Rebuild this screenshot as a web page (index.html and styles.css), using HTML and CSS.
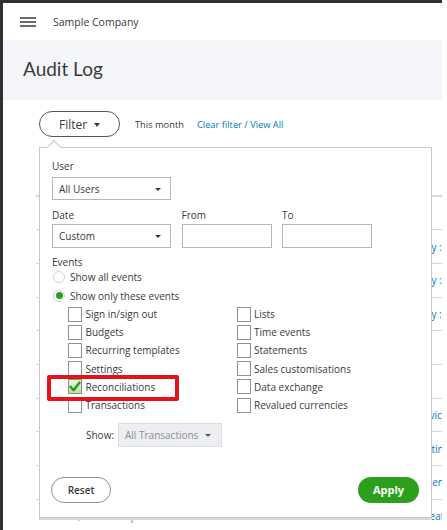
FILE: index.html
```html
<!DOCTYPE html>
<html lang="en">
<head>
<meta charset="utf-8">
<title>Audit Log</title>
<link rel="stylesheet" href="styles.css">
</head>
<body>
<div class="frame">
  <header class="topbar">
    <button class="menu" aria-label="Menu"><span></span><span></span><span></span></button>
    <span class="company">Sample Company</span>
  </header>
  <div class="title-band"><h1>Audit Log</h1></div>
  <main class="content">
    <div class="filter-row">
      <button class="filter-btn">Filter<span class="caret-lg"></span></button>
      <span class="range">This month</span>
      <a class="link" href="#">Clear filter / View All</a>
    </div>

    <div class="log">
      <div class="log-head"></div>
      <div class="log-row"><span></span><span></span><span class="ev"></span></div>
      <div class="log-row"><span></span><span></span><span class="ev">Changed Customer: <a href="#">Sample Company : Payroll</a></span></div>
      <div class="log-row"><span></span><span></span><span class="ev">Changed Customer: <a href="#">Sample Company : Invoices</a></span></div>
      <div class="log-row"><span></span><span></span><span class="ev">Changed Customer: <a href="#">Sample Company : Sales</a></span></div>
      <div class="log-row"><span></span><span></span><span class="ev"></span></div>
      <div class="log-row"><span></span><span></span><span class="ev"></span></div>
      <div class="log-row"><span></span><span></span><span class="ev">Sales Product or Service: <a href="#">Garden Services</a></span></div>
      <div class="log-row"><span></span><span></span><span class="ev">Sales Product or Service: <a href="#">Design:Painting</a></span></div>
      <div class="log-row"><span></span><span></span><span class="ev">Sales Product or Service: <a href="#">Rocks: Gardener</a></span></div>
      <div class="log-row"><span>Mar 21, 2021 3:14 pm</span><span>Sue Smith</span><span class="ev">Sales Product or Service: <a href="#">Services: Treatment</a></span></div>
    </div>

    <div class="panel">
      <div class="field-label first">User</div>
      <div class="select sel-user">All Users<span class="caret"></span></div>

      <div class="date-row">
        <div>
          <div class="field-label">Date</div>
          <div class="select sel-date">Custom<span class="caret"></span></div>
        </div>
        <div>
          <div class="field-label">From</div>
          <div class="input"></div>
        </div>
        <div>
          <div class="field-label">To</div>
          <div class="input"></div>
        </div>
      </div>

      <div class="field-label events">Events</div>
      <label class="radio-row"><span class="radio"></span>Show all events</label>
      <label class="radio-row"><span class="radio on"></span>Show only these events</label>

      <div class="checks">
        <label class="check"><span class="box"></span>Sign in/sign out</label>
        <label class="check"><span class="box"></span>Lists</label>
        <label class="check"><span class="box"></span>Budgets</label>
        <label class="check"><span class="box"></span>Time events</label>
        <label class="check"><span class="box"></span>Recurring templates</label>
        <label class="check"><span class="box"></span>Statements</label>
        <label class="check"><span class="box"></span>Settings</label>
        <label class="check"><span class="box"></span>Sales customisations</label>
        <label class="check"><span class="box checked"><svg viewBox="0 0 14 15" width="14" height="15"><path d="M2.6 7.8 L5.6 11.2 L11.6 3.6" fill="none" stroke="#239a1a" stroke-width="2.4" stroke-linecap="round" stroke-linejoin="round"/></svg></span>Reconciliations</label>
        <label class="check"><span class="box"></span>Data exchange</label>
        <label class="check"><span class="box"></span>Transactions</label>
        <label class="check"><span class="box"></span>Revalued currencies</label>
      </div>

      <div class="show-row">
        <span>Show:</span>
        <div class="select disabled">All Transactions<span class="caret"></span></div>
      </div>

      <div class="actions">
        <button class="btn-reset">Reset</button>
        <button class="btn-apply">Apply</button>
      </div>

      <div class="highlight"></div>
    </div>
  </main>
</div>
</body>
</html>
```

FILE: styles.css
```css
* { box-sizing: border-box; }

html, body {
  margin: 0;
  padding: 0;
}

body {
  background: #fff;
  font-family: "Open Sans", "Liberation Sans", sans-serif;
  font-size: 10px;
  color: #393a3d;
}

.frame {
  width: 442px;
  height: 530px;
  overflow: hidden;
  border-top: 3px solid #2f3033;
  border-left: 3px solid #2f3033;
  background: #fff;
  display: flex;
  flex-direction: column;
}

/* top bar */
.topbar {
  height: 37px;
  flex: none;
  display: flex;
  align-items: center;
  padding-left: 17px;
  padding-top: 1px;
  background: #fff;
}

.menu {
  width: 16px;
  height: 10px;
  padding: 0;
  border: 0;
  background: none;
  display: flex;
  flex-direction: column;
  justify-content: space-between;
  margin-right: 17px;
}

.menu span {
  display: block;
  height: 2px;
  background: #6b6c72;
}

.company {
  font-size: 10.5px;
  color: #393a3d;
}

/* title band */
.title-band {
  height: 60px;
  flex: none;
  background: #f4f5f8;
  padding-left: 20px;
  padding-bottom: 3px;
  display: flex;
  align-items: center;
}

.title-band h1 {
  margin: 0;
  font-family: Lato, "Open Sans", sans-serif;
  font-weight: 400;
  font-size: 19px;
  color: #393a3d;
}

/* content */
.content {
  position: relative;
  flex: 1;
  background: #fff;
}

.filter-row {
  display: flex;
  align-items: center;
  height: 26px;
  margin-top: 11px;
  padding-left: 36px;
}

.filter-btn {
  width: 81px;
  height: 26px;
  border: 1px solid #54565b;
  border-radius: 13px;
  background: #fff;
  font-family: "Open Sans", sans-serif;
  font-size: 12px;
  color: #393a3d;
  padding: 0 0 0 19px;
  display: flex;
  align-items: center;
}

.caret-lg {
  width: 0;
  height: 0;
  border-left: 3.5px solid transparent;
  border-right: 3.5px solid transparent;
  border-top: 4px solid #393a3d;
  margin-left: 7px;
  margin-top: 1px;
}

.range {
  margin-left: 15px;
  font-size: 9.3px;
  color: #393a3d;
}

.link {
  margin-left: 13px;
  font-size: 9.3px;
  color: #0077c5;
  text-decoration: none;
}

/* background log table */
.log {
  margin-top: 13px;
  padding-left: 33px;
}

.log-head,
.log-row {
  display: grid;
  grid-template-columns: 117px 100px 1fr;
  align-items: center;
  white-space: nowrap;
  overflow: hidden;
}

.log-head {
  height: 46.5px;
  border-bottom: 2px solid #d4d7dc;
}

.log-row {
  height: 33.7px;
  border-bottom: 1px solid #d4d7dc;
  color: #6b6c72;
}

.log-row span {
  overflow: hidden;
  padding-left: 7px;
}

.log-row span:first-child {
  padding-left: 9px;
}

.log-row a {
  color: #0077c5;
  text-decoration: none;
}

/* filter panel */
.panel {
  position: absolute;
  left: 36px;
  top: 47px;
  width: 393px;
  background: #fff;
  border: 1px solid #c6c8cc;
  box-shadow: 0 2px 0 #d6d8db;
  padding: 0 12px 14px 12px;
}

.panel::before {
  content: "";
  position: absolute;
  left: 9px;
  top: -6px;
  width: 9px;
  height: 9px;
  background: #fff;
  border-top: 1px solid #c6c8cc;
  border-left: 1px solid #c6c8cc;
  transform: rotate(45deg);
}

.field-label {
  line-height: 14px;
  height: 14px;
}

.field-label.first {
  margin-top: 11px;
}

.select {
  position: relative;
  display: flex;
  align-items: center;
  height: 23px;
  border: 1px solid #b3b6bb;
  padding-left: 6px;
  background: #fff;
  color: #393a3d;
}

.sel-user {
  width: 119px;
  margin-top: 4px;
}

.caret {
  position: absolute;
  right: 9px;
  top: 50%;
  margin-top: -1px;
  width: 0;
  height: 0;
  border-left: 3px solid transparent;
  border-right: 3px solid transparent;
  border-top: 3px solid #393a3d;
}

.date-row {
  display: grid;
  grid-template-columns: 119px 90px 90px;
  column-gap: 10.5px;
  margin-top: 8px;
}

.sel-date {
  width: 119px;
  height: 24px;
  margin-top: 2px;
}

.input {
  height: 24px;
  margin-top: 2px;
  border: 1px solid #b3b6bb;
  background: #fff;
}

.field-label.events {
  margin-top: 8px;
  line-height: 12px;
  height: 12px;
}

.radio-row {
  display: flex;
  align-items: center;
  height: 18.5px;
  padding-left: 1px;
}

.radio {
  width: 12px;
  height: 12px;
  border-radius: 50%;
  border: 1px solid #d0d2d6;
  background: #fff;
  margin-right: 5px;
  display: flex;
  align-items: center;
  justify-content: center;
}

.radio.on::after {
  content: "";
  width: 7px;
  height: 7px;
  border-radius: 50%;
  background: #2ca01c;
}

.checks {
  display: grid;
  grid-template-columns: 168.5px auto;
  grid-auto-rows: 18.2px;
  padding-left: 16px;
}

.check {
  display: flex;
  align-items: center;
  white-space: nowrap;
}

.box {
  width: 14px;
  height: 15px;
  border: 1px solid #8d9096;
  background: #fff;
  margin-right: 3.5px;
  flex: none;
}

.box.checked {
  border-color: #7f9a78;
  background: linear-gradient(#eef8e8, #b9dfab);
  display: flex;
}

.box.checked svg {
  margin: -1px;
}

.show-row {
  display: flex;
  align-items: center;
  margin-top: 8.8px;
  padding-left: 34px;
}

.show-row > span {
  margin-right: 4px;
}

.select.disabled {
  width: 104px;
  height: 24px;
  background: #eceef1;
  border-color: #dcdee2;
  color: #8d9096;
}

.select.disabled .caret {
  border-top-color: #54565b;
  right: 10px;
}

.actions {
  display: flex;
  justify-content: space-between;
  margin-top: 30px;
  margin-left: -1px;
}

.btn-reset,
.btn-apply {
  height: 26px;
  border-radius: 13px;
  font-family: "Open Sans", sans-serif;
  padding: 0;
}

.btn-reset {
  width: 60px;
  border: 1px solid #8d9096;
  background: #fff;
  color: #393a3d;
  font-size: 10px;
  font-weight: 600;
}

.btn-apply {
  width: 61px;
  border: 0;
  background: #2ca01c;
  color: #fff;
  font-size: 11px;
  font-weight: 700;
}

.highlight {
  position: absolute;
  left: 7px;
  top: 227px;
  width: 132px;
  height: 26px;
  border: 4px solid #e3121b;
  border-radius: 2px;
}
```
